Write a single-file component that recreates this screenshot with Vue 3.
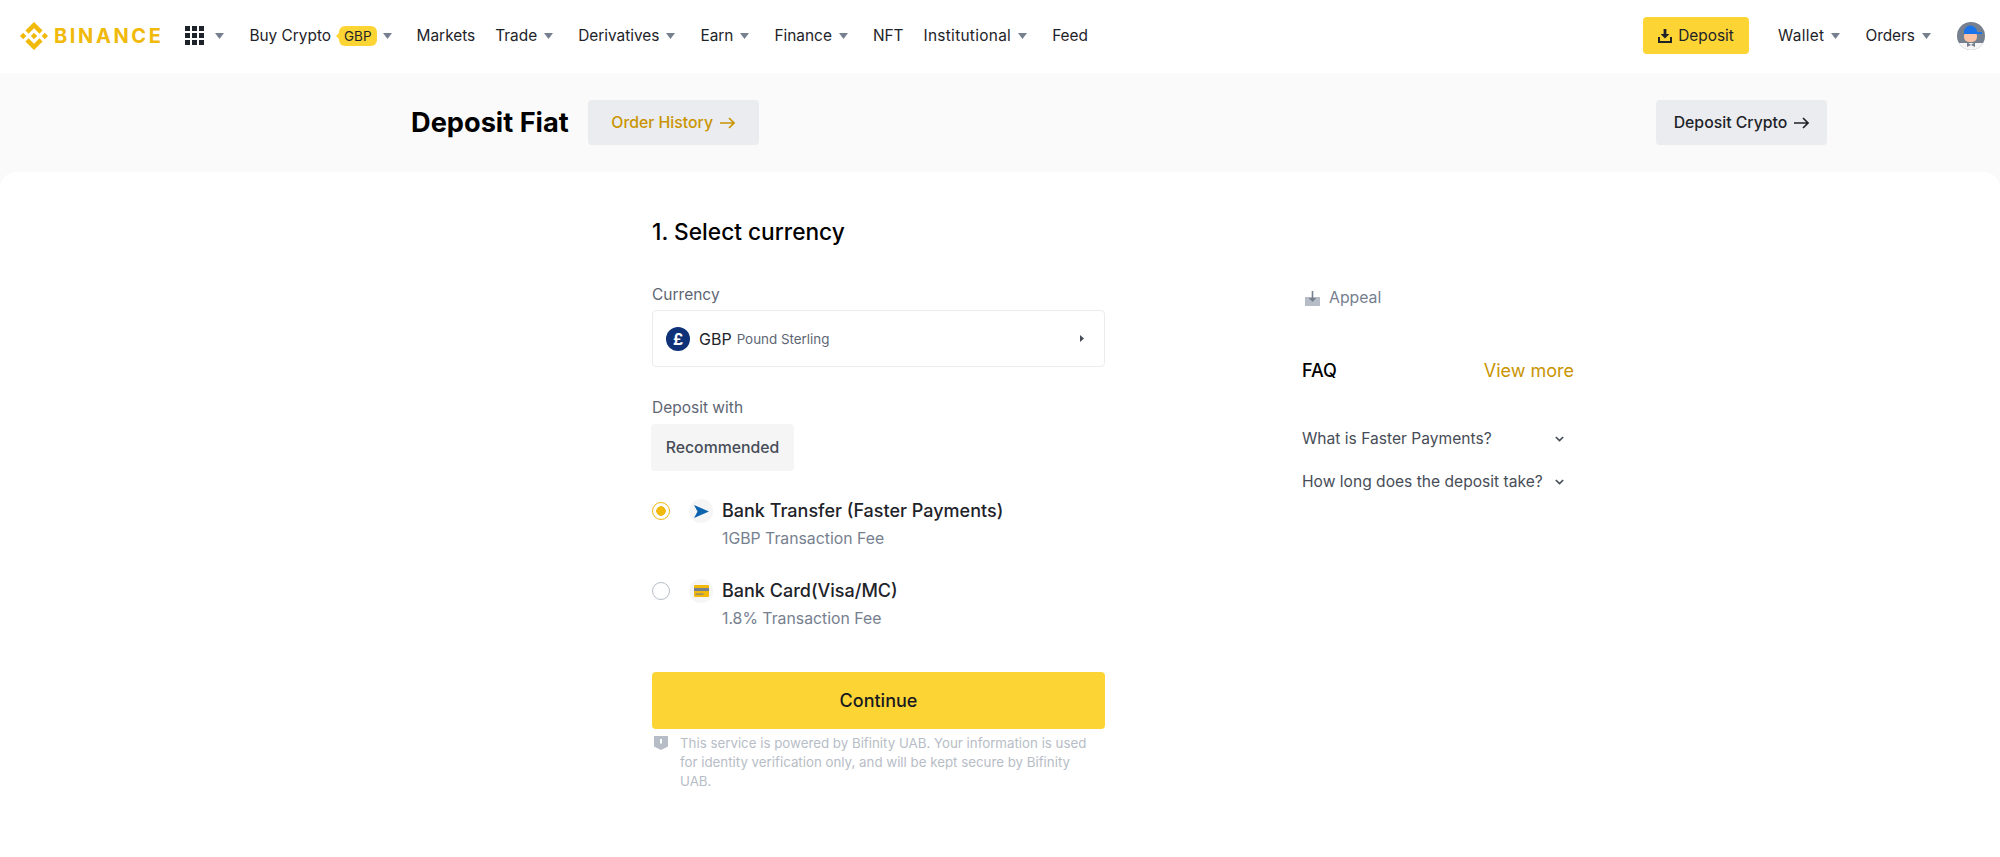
<template>
  <div class="page">
    <header class="topbar">
      <div class="logo">
        <svg class="logo-mark" viewBox="0 0 126.61 126.61">
          <path fill="#F0B90B" d="M38.73 53.2l24.59-24.58 24.6 24.6 14.3-14.31L63.32 0 24.43 38.9zM0 63.31l14.3-14.31 14.31 14.31-14.31 14.3zM38.73 73.41L63.32 97.99l24.6-24.6 14.31 14.29-38.91 38.91-38.9-38.88-.02-.02zM98 63.31l14.3-14.31 14.31 14.3-14.31 14.32zM77.83 63.3L63.32 48.78 52.59 59.51l-1.24 1.23-2.54 2.54 14.51 14.5 14.51-14.5z" />
        </svg>
        <span class="logo-text">BINANCE</span>
      </div>
      <div class="apps">
        <span class="apps-grid"><i v-for="n in 9" :key="n"></i></span>
        <svg class="caret" viewBox="0 0 9 6"><path d="M0 0h9L4.5 6z" /></svg>
      </div>
      <nav class="nav">
        <a v-for="item in navItems" :key="item.label" class="nav-item">
          {{ item.label }}
          <span v-if="item.badge" class="badge">{{ item.badge }}</span>
          <svg v-if="item.caret" class="caret" viewBox="0 0 9 6"><path d="M0 0h9L4.5 6z" /></svg>
        </a>
      </nav>
      <div class="top-right">
        <button class="top-deposit">
          <svg width="14" height="14" viewBox="0 0 14 14"><path fill="#1e2329" d="M5.6 0h2.8v5h3L7 9.6 2.600 5h3zM0 8h2v4h10V8h2v6H0z" /></svg>
          Deposit
        </button>
        <a class="nav-item wallet">Wallet<svg class="caret" viewBox="0 0 9 6"><path d="M0 0h9L4.5 6z" /></svg></a>
        <a class="nav-item">Orders<svg class="caret" viewBox="0 0 9 6"><path d="M0 0h9L4.5 6z" /></svg></a>
        <svg class="avatar" viewBox="0 0 28 28">
          <defs><clipPath id="av"><circle cx="14" cy="14" r="14" /></clipPath></defs>
          <g clip-path="url(#av)">
            <rect width="28" height="28" fill="#76808f" />
            <rect y="21" width="28" height="7" fill="#f5f5f5" />
            <rect x="7" y="9" width="13" height="11" rx="5" fill="#fbc2a5" />
            <path d="M7 10a6.500 6.500 0 0 1 13 0h5v2H7z" fill="#1a73e8" />
            <path d="M10 20l4 3 4-3v5l-4-2-4 2z" fill="#76808f" />
          </g>
        </svg>
      </div>
    </header>

    <section class="subhead">
      <h1>Deposit Fiat</h1>
      <button class="sub-btn gold">
        Order History
        <svg width="15" height="12" viewBox="0 0 15 12"><path fill="none" stroke="#C99400" stroke-width="1.600" d="M0 6h13.500M9 1l5 5-5 5" /></svg>
      </button>
      <button class="sub-btn dark">
        Deposit Crypto
        <svg width="15" height="12" viewBox="0 0 15 12"><path fill="none" stroke="#1e2329" stroke-width="1.600" d="M0 6h13.500M9 1l5 5-5 5" /></svg>
      </button>
    </section>

    <main class="content">
      <div class="form-col">
        <h2>1. Select currency</h2>
        <label class="field-label first">Currency</label>
        <div class="select">
          <span class="flag">£</span>
          <span class="code">GBP</span>
          <span class="cname">Pound Sterling</span>
          <svg class="select-arrow" width="4" height="7" viewBox="0 0 4 7"><path fill="#474d57" d="M0 0l4 3.500L0 7z" /></svg>
        </div>
        <label class="field-label second">Deposit with</label>
        <div class="tab">Recommended</div>

        <div v-for="(m, i) in methods" :key="m.title" class="method">
          <span class="radio" :class="{ on: i === selected }" @click="selected = i"></span>
          <span class="method-icon">
            <svg v-if="i === 0" width="15" height="13" viewBox="0 0 15 13"><path fill="#0b63b0" d="M0 0l15 6.500L0 13l3.500-6.500z" /></svg>
            <svg v-else width="15" height="12" viewBox="0 0 15 12">
              <rect width="15" height="12" rx="1" fill="#F0B90B" />
              <rect y="3" width="15" height="3" fill="#76808f" />
              <rect x="1.500" y="8.500" width="8" height="1.200" fill="#76808f" />
            </svg>
          </span>
          <div class="method-text">
            <div class="method-title">{{ m.title }}</div>
            <div class="method-fee">{{ m.fee }}</div>
          </div>
        </div>

        <button class="continue">Continue</button>
        <div class="notice">
          <svg class="shield" width="14" height="14" viewBox="0 0 14 14">
            <path fill="#b7bdc6" d="M0 0h14v10.500L7 14 0 10.500z" />
            <rect x="6" y="3" width="2" height="4.500" fill="#fff" />
          </svg>
          <p>This service is powered by Bifinity UAB. Your information is used for identity verification only, and will be kept secure by Bifinity UAB.</p>
        </div>
      </div>

      <aside class="side">
        <a class="appeal">
          <svg width="15" height="15" viewBox="0 0 15 15">
            <rect y="6" width="15" height="9" fill="#b7bdc6" />
            <path fill="#76808f" d="M6.700 0h1.600v7h3L7.500 11 3.700 7h3z" />
          </svg>
          Appeal
        </a>
        <div class="faq-head">
          <span class="faq-title">FAQ</span>
          <a class="view-more">View more</a>
        </div>
        <div v-for="q in faqs" :key="q" class="faq-item">
          <span>{{ q }}</span>
          <svg width="9" height="6" viewBox="0 0 9 6"><path fill="none" stroke="#474d57" stroke-width="1.700" d="M.8 1l3.700 3.500L8.200 1" /></svg>
        </div>
      </aside>
    </main>
  </div>
</template>

<script setup>
import { ref } from "vue";

const selected = ref(0);

const navItems = [
  { label: "Buy Crypto", badge: "GBP", caret: true },
  { label: "Markets" },
  { label: "Trade", caret: true },
  { label: "Derivatives", caret: true },
  { label: "Earn", caret: true },
  { label: "Finance", caret: true },
  { label: "NFT" },
  { label: "Institutional", caret: true },
  { label: "Feed" },
];

const methods = [
  { title: "Bank Transfer (Faster Payments)", fee: "1GBP Transaction Fee" },
  { title: "Bank Card(Visa/MC)", fee: "1.8% Transaction Fee" },
];

const faqs = ["What is Faster Payments?", "How long does the deposit take?"];
</script>

<style>
html,
body {
  margin: 0;
  background: #fff;
}
</style>

<style scoped>
.page {
  height: 857px;
  overflow: hidden;
  display: flex;
  flex-direction: column;
  background: #fafafa;
  font-family: "Inter", "Noto Sans", sans-serif;
  color: #1e2329;
}

.topbar {
  height: 73px;
  flex: none;
  box-sizing: border-box;
  display: flex;
  align-items: center;
  background: #fff;
  padding: 0 15px 2px 20px;
  font-size: 15.4px;
}

.logo {
  display: flex;
  align-items: center;
}

.logo-mark {
  width: 28px;
  height: 28px;
}

.logo-text {
  margin-left: 6px;
  font-size: 20px;
  font-weight: 700;
  color: #f0b90b;
  letter-spacing: 2.6px;
}

.apps {
  display: flex;
  align-items: center;
  margin-left: 22px;
}

.apps-grid {
  display: grid;
  grid-template-columns: repeat(3, 5px);
  gap: 2px;
}

.apps-grid i {
  width: 5px;
  height: 5px;
  background: #1e2329;
}

.caret {
  width: 9px;
  height: 6px;
  fill: #76808f;
  margin: 0 5px 0 7px;
  flex: none;
}

.apps .caret {
  margin: 0 0 0 11px;
}

.nav {
  display: flex;
  align-items: center;
  margin-left: 15px;
}

.nav-item {
  display: flex;
  align-items: center;
  padding: 0 10px;
  white-space: nowrap;
}

.nav-item:nth-child(8) {
  letter-spacing: 0.3px;
}

.badge {
  position: relative;
  margin-left: 8px;
  margin-right: -1px;
  padding: 0 5px;
  height: 20px;
  line-height: 20px;
  border-radius: 6px;
  background: #fcd535;
  font-size: 13.5px;
  letter-spacing: 0;
}

.badge::before {
  content: "";
  position: absolute;
  left: -3px;
  top: 7px;
  border-top: 3px solid transparent;
  border-bottom: 3px solid transparent;
  border-right: 3px solid #fcd535;
}

.top-right {
  margin-left: auto;
  display: flex;
  align-items: center;
}

.top-deposit {
  display: flex;
  align-items: center;
  justify-content: center;
  gap: 6px;
  width: 106px;
  height: 37px;
  border: none;
  border-radius: 4px;
  background: #fcd535;
  font: inherit;
  color: #1e2329;
}

.wallet {
  margin-left: 19px;
  letter-spacing: 0.3px;
}

.avatar {
  width: 28px;
  height: 28px;
  margin-left: 11px;
}

.subhead {
  height: 99px;
  flex: none;
  display: flex;
  align-items: center;
  padding: 0 173px 0 411px;
}

h1 {
  margin: 0;
  font-size: 27.2px;
  font-weight: 700;
  color: #000;
}

.sub-btn {
  display: flex;
  align-items: center;
  justify-content: center;
  gap: 7px;
  width: 171px;
  height: 45px;
  border: none;
  border-radius: 4px;
  background: #eaecef;
  font-family: inherit;
  font-size: 15.8px;
  font-weight: 500;
}

.gold {
  margin-left: 19px;
  color: #c99400;
}

.dark {
  margin-left: auto;
  color: #1e2329;
}

.content {
  flex: 1;
  display: flex;
  background: #fff;
  border-radius: 16px 16px 0 0;
  padding-left: 652px;
}

.form-col {
  width: 453px;
  flex: none;
}

h2 {
  margin: 44px 0 0;
  font-size: 22.7px;
  line-height: 32px;
  font-weight: 500;
  color: #000;
}

.field-label {
  display: block;
  font-size: 15.5px;
  line-height: 22px;
  color: #5e6673;
}

.first {
  margin-top: 36px;
}

.second {
  margin-top: 30px;
}

.select {
  display: flex;
  align-items: center;
  height: 57px;
  margin-top: 4px;
  padding: 0 20px 0 13px;
  box-sizing: border-box;
  border: 1px solid #eaecef;
  border-radius: 4px;
}

.flag {
  width: 24px;
  height: 24px;
  border-radius: 50%;
  background: #0e3178;
  color: #fff;
  font-size: 16px;
  font-weight: 700;
  text-align: center;
  line-height: 24px;
}

.code {
  margin-left: 9px;
  font-size: 16px;
}

.cname {
  margin-left: 5px;
  font-size: 13.4px;
  color: #5e6673;
}

.select-arrow {
  margin-left: auto;
}

.tab {
  width: 143px;
  height: 47px;
  margin: 5px 0 26px -1px;
  border-radius: 4px;
  background: #f5f5f5;
  color: #474d57;
  font-size: 15.8px;
  font-weight: 500;
  line-height: 47px;
  text-align: center;
}

.method {
  display: flex;
  align-items: flex-start;
  height: 80px;
}

.radio {
  width: 18px;
  height: 18px;
  margin-top: 5px;
  box-sizing: border-box;
  border: 1px solid #b7bdc6;
  border-radius: 50%;
  flex: none;
}

.radio.on {
  border-color: #f0b90b;
  background: radial-gradient(circle, #f0b90b 0 4.500px, #fff 5px);
}

.method-icon {
  width: 24px;
  height: 24px;
  margin: 2px 9px 0 19px;
  border-radius: 50%;
  background: #f5f5f5;
  display: flex;
  align-items: center;
  justify-content: center;
  flex: none;
}

.method-title {
  font-size: 18px;
  line-height: 28px;
  font-weight: 500;
}

.method-fee {
  font-size: 15.8px;
  line-height: 24px;
  margin-top: 2px;
  color: #76808f;
}

.continue {
  display: block;
  width: 100%;
  height: 57px;
  margin-top: 15px;
  border: none;
  border-radius: 4px;
  background: #fcd535;
  font-family: inherit;
  font-size: 18px;
  font-weight: 500;
  color: #181a20;
}

.notice {
  display: flex;
  margin-top: 7px;
  padding-left: 2px;
}

.shield {
  flex: none;
}

.notice p {
  margin: -2px 0 0 12px;
  font-size: 13.3px;
  line-height: 19px;
  color: #b7bdc6;
}

.side {
  width: 272px;
  margin-left: 197px;
  flex: none;
}

.appeal {
  display: flex;
  align-items: center;
  gap: 9px;
  margin: 114px 0 0 3px;
  font-size: 15.8px;
  line-height: 24px;
  color: #76808f;
}

.faq-head {
  display: flex;
  justify-content: space-between;
  align-items: center;
  margin-top: 47px;
  font-size: 18px;
  line-height: 28px;
}

.faq-title {
  font-weight: 500;
  color: #000;
}

.view-more {
  color: #c99400;
}

.faq-item {
  display: flex;
  justify-content: space-between;
  align-items: center;
  width: 262px;
  height: 43px;
  font-size: 15.6px;
  color: #474d57;
}

.faq-head + .faq-item {
  margin-top: 32px;
}
</style>
